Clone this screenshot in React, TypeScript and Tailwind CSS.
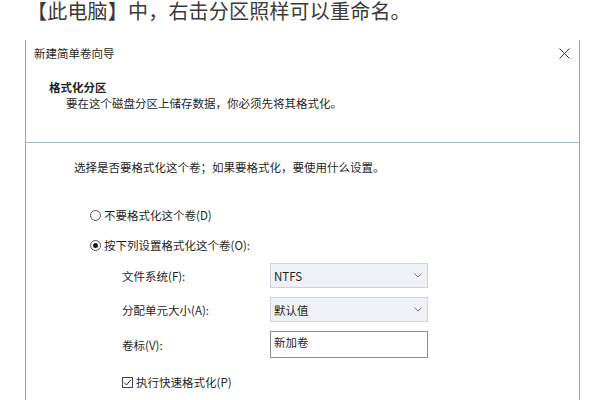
const font = { fontFamily: '"Noto Sans CJK SC", "Noto Sans", sans-serif' };

function Chevron() {
  return (
    <svg width="8" height="5" viewBox="0 0 8 5" fill="none">
      <path d="M0.5 0.5 L4 4 L7.5 0.5" stroke="#7a7a7a" strokeWidth="1" />
    </svg>
  );
}

function Select({ value }: { value: string }) {
  return (
    <div className="w-[158px] h-[25px] bg-[#eef2f6] border border-[#cdd5dc] flex items-center justify-between pl-[3px] pr-[5px]">
      <span>{value}</span>
      <Chevron />
    </div>
  );
}

function Radio({ checked }: { checked?: boolean }) {
  return (
    <span className="w-[11px] h-[11px] rounded-full border border-[#555] bg-white flex items-center justify-center mr-[3px]">
      {checked && <span className="w-[5px] h-[5px] rounded-full bg-[#1a1a1a]" />}
    </span>
  );
}

function FieldRow({ label, children }: { label: string; children: React.ReactNode }) {
  return (
    <div className="flex items-center">
      <span className="w-[148px]">{label}</span>
      {children}
    </div>
  );
}

export default function App() {
  return (
    <div className="w-[605px] h-[400px] bg-white overflow-hidden flex flex-col" style={font}>
      {/* caption above the screenshot */}
      <div className="pl-[27px] h-[40px] text-[20px] leading-[22px] text-[#3a3a3a] tracking-[0.2px]">
        【此电脑】中，右击分区照样可以重命名。
      </div>

      {/* wizard dialog */}
      <div className="ml-[25px] w-[555px] flex-1 border-l border-r border-[#9aa6ae] text-[11.5px] leading-[14px] text-[#1f1f1f]">
        <div className="flex items-center justify-between pl-[8px] pr-[9px] pt-[6px]">
          <span>新建简单卷向导</span>
          <svg width="11" height="11" viewBox="0 0 11 11" fill="none">
            <path d="M0.5 0.5 L10.5 10.5 M10.5 0.5 L0.5 10.5" stroke="#333" strokeWidth="1" />
          </svg>
        </div>

        <div className="pl-[23px] pt-[20px] pb-[32px]">
          <div className="font-bold">格式化分区</div>
          <div className="pl-[17px] mt-[2px]">要在这个磁盘分区上储存数据，你必须先将其格式化。</div>
        </div>

        <div className="border-t border-[#a9b5bd] pl-[48px] pt-[17px]">
          <div>选择是否要格式化这个卷；如果要格式化，要使用什么设置。</div>

          <div className="ml-[16px] mt-[34px] flex items-center">
            <Radio />
            <span>不要格式化这个卷(D)</span>
          </div>
          <div className="ml-[16px] mt-[16px] flex items-center">
            <Radio checked />
            <span>按下列设置格式化这个卷(O):</span>
          </div>

          <div className="ml-[48px] mt-[11px] flex flex-col gap-[9px]">
            <FieldRow label="文件系统(F):">
              <Select value="NTFS" />
            </FieldRow>
            <FieldRow label="分配单元大小(A):">
              <Select value="默认值" />
            </FieldRow>
            <FieldRow label="卷标(V):">
              <div className="w-[158px] h-[27px] bg-white border border-[#8c8c8c] pl-[3px] pt-[3px]">新加卷</div>
            </FieldRow>
          </div>

          <div className="ml-[48px] mt-[17px] flex items-center">
            <span className="w-[11px] h-[11px] border border-[#444] bg-white flex items-center justify-center mr-[3px]">
              <svg width="9" height="9" viewBox="0 0 9 9" fill="none">
                <path d="M1 4.5 L3.5 7 L8 1.5" stroke="#222" strokeWidth="1" />
              </svg>
            </span>
            <span>执行快速格式化(P)</span>
          </div>
        </div>
      </div>
    </div>
  );
}
